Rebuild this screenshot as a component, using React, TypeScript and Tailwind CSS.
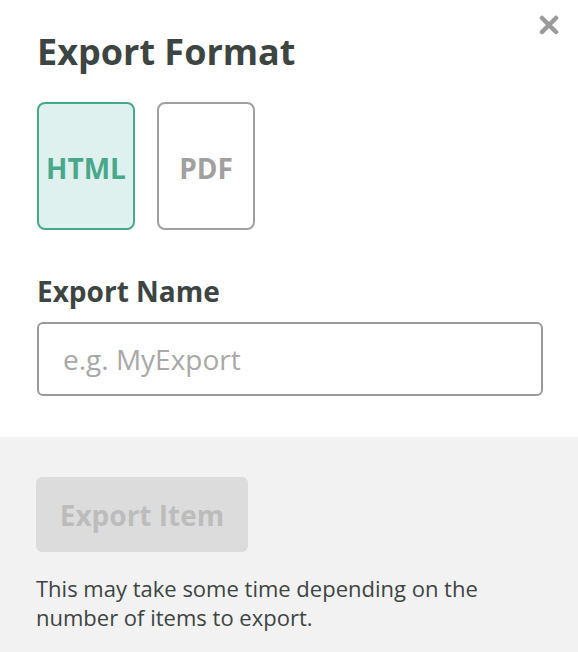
import { useState } from "react";

type FormatCardProps = {
  label: string;
  active: boolean;
  onClick: () => void;
};

function FormatCard({ label, active, onClick }: FormatCardProps) {
  return (
    <button
      onClick={onClick}
      className={`w-[98px] h-[128px] rounded-[8px] border-2 flex items-center justify-center pt-[4px] text-[28px] font-bold ${
        active
          ? "border-[#4aa88a] bg-[#dff1ee] text-[#4aa88a]"
          : "border-[#a0a0a0] bg-white text-[#a0a0a0]"
      }`}
    >
      {label}
    </button>
  );
}

export default function App() {
  const [format, setFormat] = useState("HTML");
  return (
    <div className="relative w-[578px] h-[652px] bg-white flex flex-col font-['Open_Sans',sans-serif] text-[#3d4543]">
      <button className="absolute top-[14px] right-[18px] w-[22px] h-[22px] flex items-center justify-center">
        <svg width="20" height="20" viewBox="0 0 20 20">
          <path
            d="M3 3 L17 17 M17 3 L3 17"
            stroke="#9a9a9a"
            strokeWidth="4.5"
            strokeLinecap="round"
          />
        </svg>
      </button>

      <div className="px-[37px] pt-[28px] pb-[41px]">
        <h1 className="text-[36px] font-bold leading-[48px]">Export Format</h1>
        <div className="flex gap-[22px] mt-[26px]">
          {["HTML", "PDF"].map((f) => (
            <FormatCard
              key={f}
              label={f}
              active={format === f}
              onClick={() => setFormat(f)}
            />
          ))}
        </div>
        <p className="text-[28px] font-bold mt-[44px] leading-[34px]">Export Name</p>
        <input
          className="mt-[14px] w-[506px] h-[74px] rounded-[6px] border-2 border-[#9a9a9a] px-[24px] text-[28px] placeholder:text-[#a8a8a8] outline-none"
          placeholder="e.g. MyExport"
        />
      </div>

      <div className="flex-1 bg-[#f2f2f2] px-[36px] pt-[40px]">
        <button
          disabled
          className="w-[212px] h-[75px] rounded-[6px] bg-[#dcdcdc] text-[#bcbcbc] text-[28px] font-bold"
        >
          Export Item
        </button>
        <p className="mt-[22px] text-[22px] leading-[29px] w-[470px]">
          This may take some time depending on the number of items to export.
        </p>
      </div>
    </div>
  );
}
